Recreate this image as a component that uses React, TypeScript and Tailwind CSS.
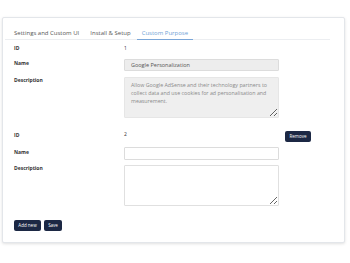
import React from "react";

export default function App() {
  const font = { fontFamily: '"Open Sans", "Liberation Sans", sans-serif' };
  return (
    <div className="w-[350px] h-[263px] bg-white overflow-hidden" style={font}>
      <div className="ml-[2px] mt-[17px] w-[343px] h-[226px] bg-white border border-[#e3e6ea] rounded-[2px] shadow-[0_1px_3px_rgba(0,0,0,0.12)] flex flex-col">
        {/* Tabs */}
        <div className="ml-[2px] mr-[14px] h-[22px] flex items-end pl-[4px] gap-[1px] border-b border-[#eceef1] text-[6px] leading-[7px] text-[#555]">
          <div className="px-[5px] pb-[2px]">Settings and Custom UI</div>
          <div className="px-[5px] pb-[2px]">Install &amp; Setup</div>
          <div className="px-[5px] pb-[2px] -mb-px border-b border-[#7aa6d8] text-[#6f9fd6]">Custom Purpose</div>
        </div>

        <div className="pl-[11px] pt-[3px] flex flex-col text-[5px] text-[#333]">
          {/* Block 1 */}
          <div className="flex h-[12px] items-center">
            <div className="w-[110px] font-bold">ID</div>
            <div>1</div>
          </div>
          <div className="flex mt-[4px]">
            <div className="w-[110px] font-bold leading-[8px]">Name</div>
            <div className="w-[155px] h-[12px] bg-[#ededed] border border-[#dcdcdc] rounded-[1px] pl-[6px] flex items-center text-[5.5px] text-[#555]">
              Google Personalization
            </div>
          </div>
          <div className="flex mt-[6px]">
            <div className="w-[110px] font-bold leading-[7px]">Description</div>
            <textarea
              readOnly
              defaultValue="Allow Google AdSense and their technology partners to collect data and use cookies for ad personalisation and measurement."
              className="w-[155px] h-[41px] bg-[#efefef] border border-[#e6e6e6] rounded-[1px] pl-[6px] pr-[1px] pt-[3px] text-[5.3px] leading-[8px] text-[#8a8a8a] outline-none"
              style={font}
            />
          </div>

          {/* Block 2 */}
          <div className="flex items-start h-[13px] mt-[12px]">
            <div className="w-[110px] font-bold leading-[8px] pt-[1px]">ID</div>
            <div className="w-[155px] leading-[8px]">2</div>
            <button className="ml-[6px] mt-[1px] w-[26px] h-[11px] bg-[#1c2844] text-white text-[4.5px] rounded-[2px] flex items-center justify-center">
              Remove
            </button>
          </div>
          <div className="flex mt-[4px]">
            <div className="w-[110px] font-bold leading-[8px] pt-[1px]">Name</div>
            <div className="w-[155px] h-[13px] bg-white border border-[#dcdcdc] rounded-[1px]" />
          </div>
          <div className="flex mt-[5px]">
            <div className="w-[110px] font-bold leading-[7px]">Description</div>
            <textarea
              className="w-[155px] h-[41px] bg-white border border-[#e0e0e0] rounded-[1px] outline-none"
              style={font}
            />
          </div>

          <div className="flex gap-[3px] mt-[14px]">
            <button className="w-[27px] h-[11px] bg-[#1c2844] text-white text-[4.5px] rounded-[2px] flex items-center justify-center">
              Add new
            </button>
            <button className="w-[18px] h-[11px] bg-[#1c2844] text-white text-[4.5px] rounded-[2px] flex items-center justify-center">
              Save
            </button>
          </div>
        </div>
      </div>
    </div>
  );
}
